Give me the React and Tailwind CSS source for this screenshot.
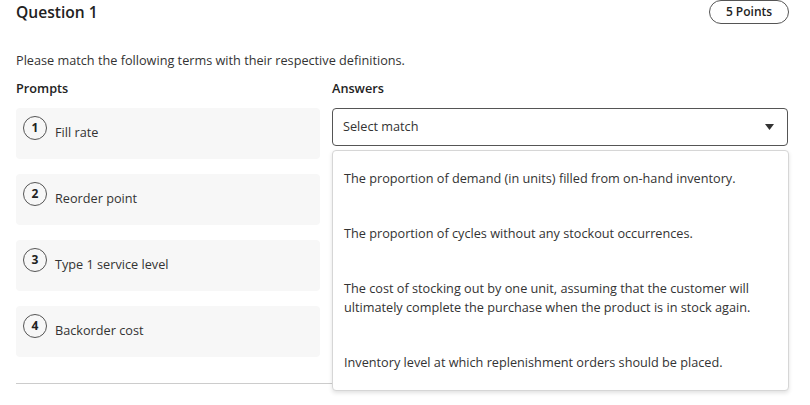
const prompts = [
  { n: 1, label: "Fill rate" },
  { n: 2, label: "Reorder point" },
  { n: 3, label: "Type 1 service level" },
  { n: 4, label: "Backorder cost" },
]

const answers = [
  "The proportion of demand (in units) filled from on-hand inventory.",
  "The proportion of cycles without any stockout occurrences.",
  "The cost of stocking out by one unit, assuming that the customer will ultimately complete the purchase when the product is in stock again.",
  "Inventory level at which replenishment orders should be placed.",
]

export default function App() {
  return (
    <div
      className="w-[810px] h-[405px] overflow-hidden bg-white pl-4 pr-[21px] text-[#333]"
      style={{ fontFamily: '"Open Sans", "Liberation Sans", sans-serif' }}
    >
      {/* Header */}
      <div className="flex items-center justify-between h-6">
        <h2 className="text-[15.6px] leading-6 font-semibold text-[#222]">Question 1</h2>
        <span className="h-6 w-[80px] flex items-center justify-center rounded-full border border-[#555] text-xs font-semibold text-[#222]">
          5 Points
        </span>
      </div>

      <p className="mt-[27px] text-[12.7px] leading-[18px]">
        Please match the following terms with their respective definitions.
      </p>

      <div className="flex gap-3 mt-[10px]">
        {/* Prompts */}
        <div className="w-[304px]">
          <div className="text-[12.7px] leading-[18px] font-semibold text-[#222]">Prompts</div>
          <div className="mt-[11px] flex flex-col gap-[15px]">
            {prompts.map((p) => (
              <div key={p.n} className="h-[51px] bg-[#f7f7f7] rounded-sm flex items-start pt-2 pl-[7px]">
                <span className="w-6 h-6 shrink-0 rounded-full border border-[#555] flex items-center justify-center text-xs font-bold text-[#222]">
                  {p.n}
                </span>
                <span className="ml-2 mt-[7px] text-[12.7px] leading-[18px]">{p.label}</span>
              </div>
            ))}
          </div>
        </div>

        {/* Answers */}
        <div className="flex-1">
          <div className="text-[12.7px] leading-[18px] font-semibold text-[#222]">Answers</div>
          <div className="relative mt-[11px]">
            <div className="h-[38px] w-[456px] border border-[#555] rounded-sm flex items-center justify-between pl-[10px] pr-[13px]">
              <span className="text-[12.7px]">Select match</span>
              <svg width="9" height="6" viewBox="0 0 9 6">
                <path d="M0 0 H9 L4.5 6 Z" fill="#333" />
              </svg>
            </div>
            <div className="absolute z-10 left-0 top-[42px] w-[457px] bg-white border border-[#d6d6d6] rounded-sm shadow-[0_2px_4px_rgba(0,0,0,0.12)]">
              {answers.map((a, i) => (
                <div key={i} className="px-[11px] py-[18px] text-[12.7px] leading-[19px]">
                  {a}
                </div>
              ))}
            </div>
          </div>
        </div>
      </div>

      <div className="mt-[26px] h-px bg-[#cccccc]" />
    </div>
  )
}
